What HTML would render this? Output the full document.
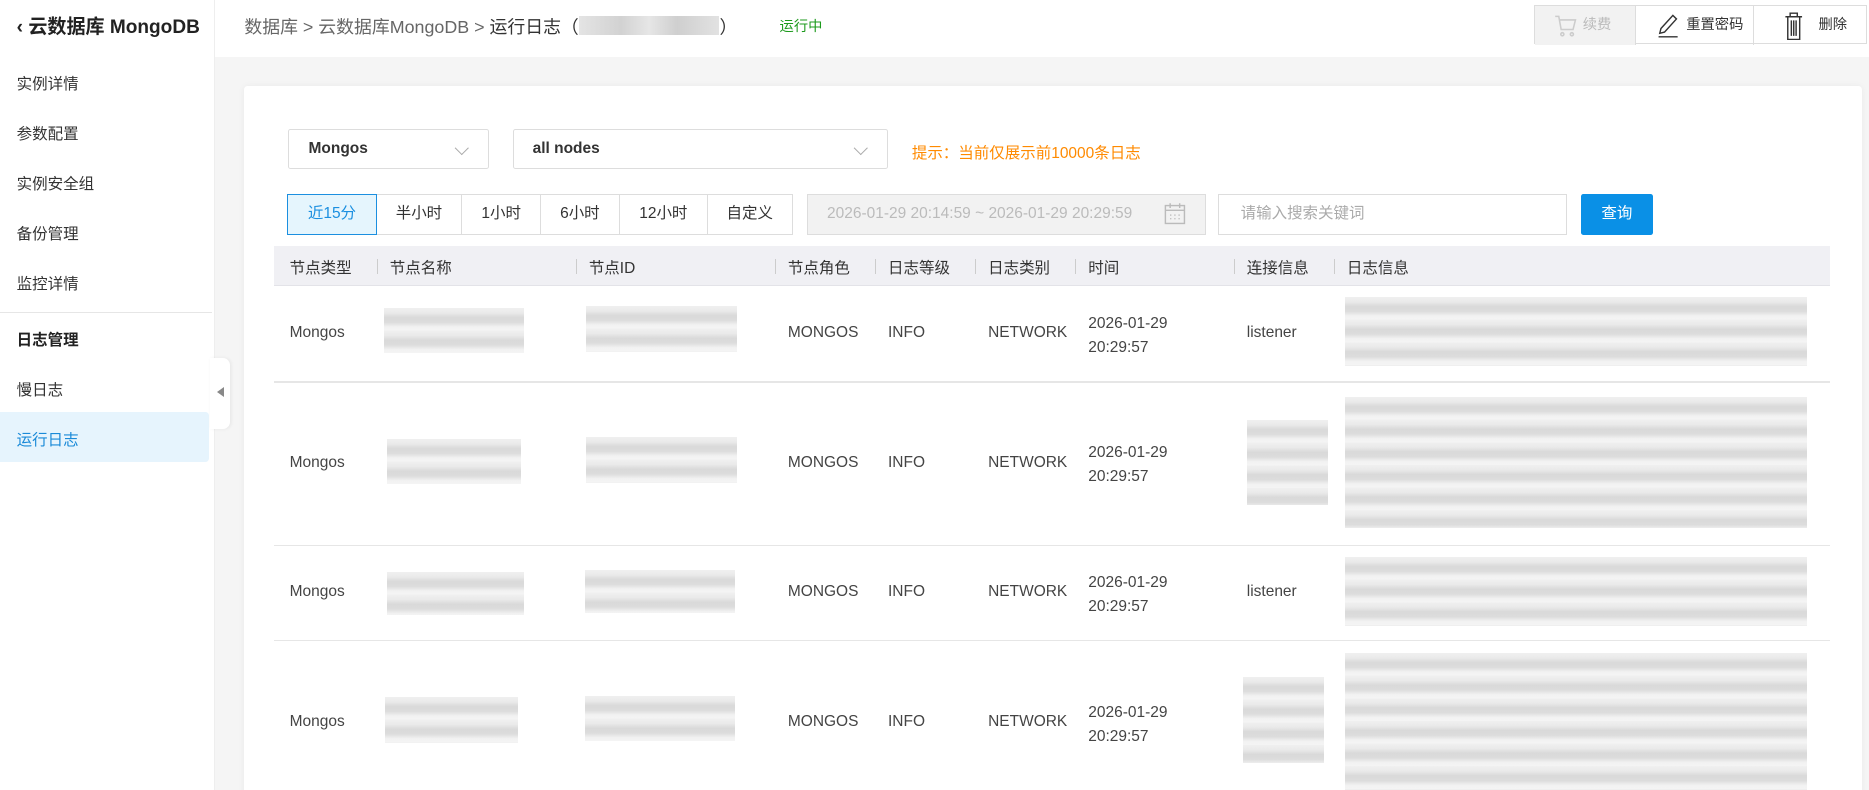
<!DOCTYPE html>
<html><head><meta charset="utf-8"><style>
*{margin:0;padding:0;box-sizing:border-box}
html,body{width:1869px;height:790px;overflow:hidden;background:#f5f5f5}
#z{zoom:1.19196;width:1568px;height:663px;position:relative;font-family:"Liberation Sans","Noto Sans CJK SC",sans-serif;color:#333;font-size:13px;overflow:hidden}
.a{position:absolute}
.side{left:0;top:0;width:180px;height:663px;background:#fff;border-right:1px solid #eee}
.side .t{left:14px;top:10px;font-weight:bold;font-size:16px;color:#222}
.mi{position:absolute;left:14px;font-size:13px;color:#333}
.hdr{left:180px;top:0;width:1388px;height:48px;background:#fff}
.card{left:205px;top:72px;width:1357px;height:600px;background:#fff;border-radius:3px;box-shadow:0 0 6px rgba(0,0,0,.05)}
.sel{position:absolute;height:34px;border:1px solid #ddd;border-radius:2px;font-weight:bold;padding-left:16px;line-height:32px;font-size:13px}
.chev{position:absolute;right:18px;top:11px;width:8px;height:8px;border-right:1px solid #aaa;border-bottom:1px solid #aaa;transform:rotate(45deg)}
.tb{position:absolute;top:163px;height:34px;border:1px solid #ddd;text-align:center;line-height:32px;background:#fff}
.th{position:absolute;top:206px;left:230px;width:1305px;height:34px;background:#f0f0f4;border-bottom:1px solid #e3e3e8}
.th span{position:absolute;top:9px;font-size:13px;color:#333}
.th i{position:absolute;top:11px;width:1px;height:13px;background:#ccc}
.rl{position:absolute;left:230px;width:1305px;height:1px;background:#e6e6e6}
.c{position:absolute;font-size:13px;color:#444}
.b{position:absolute;background:repeating-linear-gradient(180deg,#f0f0f0 0,#eaeaea 4px,#d9d9d9 8px,#dcdcdc 12px,#f2f2f2 16px,#f4f4f4 19px)}
.btn{position:absolute;top:0;height:33px;line-height:33px;font-size:12px;border-left:1px solid #ddd}
</style></head><body><div id="z">
<div class="a side">
 <div class="a t">‹ 云数据库 MongoDB</div>
 <div class="mi" style="top:60px">实例详情</div>
 <div class="mi" style="top:102px">参数配置</div>
 <div class="mi" style="top:144px">实例安全组</div>
 <div class="mi" style="top:186px">备份管理</div>
 <div class="mi" style="top:228px">监控详情</div>
 <div class="a" style="left:0;top:262px;width:178px;height:1px;background:#e6e6e6"></div>
 <div class="mi" style="top:275px;font-weight:bold;color:#222">日志管理</div>
 <div class="mi" style="top:317px">慢日志</div>
 <div class="a" style="left:0;top:346px;width:175px;height:42px;background:#e6f4fd;border-radius:0 3px 3px 0"></div>
 <div class="mi" style="top:359px;color:#1a8ad8">运行日志</div>
</div>
<div class="a" style="left:176px;top:300px;width:17px;height:60px;background:#fff;border-radius:0 6px 6px 0;box-shadow:1px 0 3px rgba(0,0,0,.06)"></div>
<div class="a" style="left:182px;top:325px;width:0;height:0;border-top:5px solid transparent;border-bottom:5px solid transparent;border-right:6px solid #888"></div>
<div class="a hdr">
 <div class="a" style="left:25px;top:11px;font-size:15px;color:#666;white-space:nowrap">数据库 &gt; 云数据库MongoDB &gt; <span style="color:#333">运行日志（<span style="display:inline-block;width:118px;height:16px;vertical-align:-2px;background:linear-gradient(90deg,#e4e4e4,#d2d2d2 30%,#e6e6e6 50%,#cfcfcf 70%,#e2e2e2)"></span>）</span></div>
 <div class="a" style="left:474px;top:13px;font-size:12px;color:#1d9a1d">运行中</div>
 <div class="a" style="left:1107px;top:4px;width:279px;height:33px;border:1px solid #ddd;background:#fff">
  <div class="btn" style="left:0;width:84px;background:#f2f2f2;border-left:none;color:#bbb;padding-left:40px">续费
   <svg class="a" style="left:16px;top:7px" width="20" height="20" viewBox="0 0 20 20" fill="none" stroke="#ccc" stroke-width="1.3"><path d="M1 2h3l2 11h10l2-8H5"/><circle cx="7" cy="17" r="1.3"/><circle cx="15" cy="17" r="1.3"/></svg></div>
  <div class="btn" style="left:84px;width:99px;color:#333;padding-left:42px">重置密码
   <svg class="a" style="left:16px;top:6px" width="22" height="22" viewBox="0 0 22 22" fill="none" stroke="#333" stroke-width="1.2"><path d="M4 17l1-4L15 2l3 3L8 16z M3 20h16"/></svg></div>
  <div class="btn" style="left:183px;width:96px;color:#333;padding-left:54px">删除
   <svg class="a" style="left:24px;top:5px" width="18" height="24" viewBox="0 0 18 24" fill="none" stroke="#333" stroke-width="1.2"><path d="M2 4h14M6 4V1h6v3M4 4v19h10V4M7 7v13M9 7v13M11 7v13"/></svg></div>
 </div>
</div>
<div class="a card"></div>
<div class="sel" style="left:242px;top:108px;width:168px">Mongos<i class="chev"></i></div>
<div class="sel" style="left:430px;top:108px;width:315px">all nodes<i class="chev"></i></div>
<div class="a" style="left:765px;top:118px;font-size:13px;color:#ff8a00">提示：当前仅展示前10000条日志</div>
<div class="tb" style="left:241px;width:75px;background:#e5f5fd;border-color:#1b8fe0;color:#1b8fe0;z-index:2">近15分</div>
<div class="tb" style="left:315px;width:73px">半小时</div>
<div class="tb" style="left:387px;width:67px">1小时</div>
<div class="tb" style="left:453px;width:67px">6小时</div>
<div class="tb" style="left:519px;width:75px">12小时</div>
<div class="tb" style="left:593px;width:72px">自定义</div>
<div class="a" style="left:677px;top:163px;width:335px;height:34px;border:1px solid #ddd;background:#f2f2f2;color:#bbb;line-height:32px;padding-left:16px">2026-01-29 20:14:59 ~ 2026-01-29 20:29:59
 <svg class="a" style="left:298px;top:6px" width="20" height="20" viewBox="0 0 20 20" fill="none" stroke="#bbb" stroke-width="1.2"><rect x="2" y="3" width="16" height="15"/><path d="M2 7h16M6 1v4M14 1v4M6 11h1M9.5 11h1M13 11h1M6 14h1M9.5 14h1M13 14h1"/></svg></div>
<div class="a" style="left:1022px;top:163px;width:293px;height:34px;border:1px solid #ddd;background:#fff;color:#aaa;line-height:32px;padding-left:18px">请输入搜索关键词</div>
<div class="a" style="left:1326px;top:163px;width:61px;height:34px;background:#0a90e6;color:#fff;line-height:34px;text-align:center;border-radius:2px">查询</div>
<div class="th">
 <span style="left:13px">节点类型</span><i style="left:86px"></i>
 <span style="left:97px">节点名称</span><i style="left:253px"></i>
 <span style="left:264px">节点ID</span><i style="left:420px"></i>
 <span style="left:431px">节点角色</span><i style="left:504px"></i>
 <span style="left:515px">日志等级</span><i style="left:588px"></i>
 <span style="left:599px">日志类别</span><i style="left:672px"></i>
 <span style="left:683px">时间</span><i style="left:805px"></i>
 <span style="left:816px">连接信息</span><i style="left:889px"></i>
 <span style="left:900px">日志信息</span>
</div>
<div class="rl" style="top:320px"></div>
<div class="rl" style="top:457px"></div>
<div class="rl" style="top:537px"></div>
<div class="c" style="left:243px;top:272px">Mongos</div>
<div class="b" style="left:322px;top:258px;width:118px;height:38px"></div>
<div class="b" style="left:492px;top:257px;width:126px;height:38px"></div>
<div class="c" style="left:661px;top:272px">MONGOS</div>
<div class="c" style="left:745px;top:272px">INFO</div>
<div class="c" style="left:829px;top:272px">NETWORK</div>
<div class="c" style="left:913px;top:262px;line-height:20px">2026-01-29<br>20:29:57</div>
<div class="c" style="left:1046px;top:272px">listener</div>
<div class="b" style="left:1128px;top:249px;width:388px;height:58px"></div>
<div class="c" style="left:243px;top:381px">Mongos</div>
<div class="b" style="left:325px;top:368px;width:112px;height:38px"></div>
<div class="b" style="left:492px;top:367px;width:126px;height:38px"></div>
<div class="c" style="left:661px;top:381px">MONGOS</div>
<div class="c" style="left:745px;top:381px">INFO</div>
<div class="c" style="left:829px;top:381px">NETWORK</div>
<div class="c" style="left:913px;top:370px;line-height:20px">2026-01-29<br>20:29:57</div>
<div class="b" style="left:1046px;top:352px;width:68px;height:72px"></div>
<div class="b" style="left:1128px;top:333px;width:388px;height:110px"></div>
<div class="c" style="left:243px;top:489px">Mongos</div>
<div class="b" style="left:325px;top:480px;width:115px;height:36px"></div>
<div class="b" style="left:491px;top:478px;width:126px;height:36px"></div>
<div class="c" style="left:661px;top:489px">MONGOS</div>
<div class="c" style="left:745px;top:489px">INFO</div>
<div class="c" style="left:829px;top:489px">NETWORK</div>
<div class="c" style="left:913px;top:479px;line-height:20px">2026-01-29<br>20:29:57</div>
<div class="c" style="left:1046px;top:489px">listener</div>
<div class="b" style="left:1128px;top:467px;width:388px;height:58px"></div>
<div class="c" style="left:243px;top:598px">Mongos</div>
<div class="b" style="left:323px;top:585px;width:112px;height:38px"></div>
<div class="b" style="left:491px;top:584px;width:126px;height:38px"></div>
<div class="c" style="left:661px;top:598px">MONGOS</div>
<div class="c" style="left:745px;top:598px">INFO</div>
<div class="c" style="left:829px;top:598px">NETWORK</div>
<div class="c" style="left:913px;top:588px;line-height:20px">2026-01-29<br>20:29:57</div>
<div class="b" style="left:1043px;top:568px;width:68px;height:72px"></div>
<div class="b" style="left:1128px;top:548px;width:388px;height:115px"></div>
</div></body></html>
